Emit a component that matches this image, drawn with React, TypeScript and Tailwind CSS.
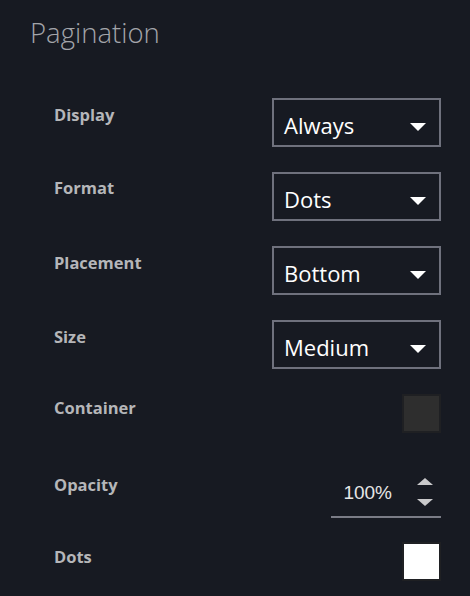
import React from "react";

function Caret() {
  return (
    <svg width="16" height="8" viewBox="0 0 16 8" className="mt-[9px] shrink-0">
      <path d="M0 0H16L8 8Z" fill="#ffffff" />
    </svg>
  );
}

function Select({ value }: { value: string }) {
  return (
    <div className="flex h-[49px] w-[169px] items-center justify-between border-2 border-[#6f717d] pl-[10px] pr-[13px]">
      <span className="mt-[4px] text-[22px] leading-none text-white">{value}</span>
      <Caret />
    </div>
  );
}

function Label({ children, offset }: { children: React.ReactNode; offset: string }) {
  return (
    <span className={`${offset} text-[16.5px] font-bold leading-[22px] text-[#b5b6b9]`}>{children}</span>
  );
}

export default function App() {
  return (
    <main
      className="min-h-screen w-full bg-[#171a22] pr-[29px] pt-[16px] pl-[30px]"
      style={{ fontFamily: '"Open Sans", sans-serif' }}
    >
      <h1 className="text-[27.5px] font-light leading-[34px] text-[#a3a5aa]">Pagination</h1>

      <div className="mt-[48px] flex flex-col pl-[24px]">
        <div className="flex items-start justify-between">
          <Label offset="mt-[6px]">Display</Label>
          <Select value="Always" />
        </div>
        <div className="mt-[25px] flex items-start justify-between">
          <Label offset="mt-[5px]">Format</Label>
          <Select value="Dots" />
        </div>
        <div className="mt-[25px] flex items-start justify-between">
          <Label offset="mt-[6px]">Placement</Label>
          <Select value="Bottom" />
        </div>
        <div className="mt-[25px] flex items-start justify-between">
          <Label offset="mt-[6px]">Size</Label>
          <Select value="Medium" />
        </div>

        <div className="mt-[25px] flex items-start justify-between">
          <Label offset="mt-[3px]">Container</Label>
          <div className="h-[39px] w-[39px] border-2 border-[#1f2023] bg-[#2e2e2e]" />
        </div>

        <div className="mt-[37px] flex items-start justify-between">
          <Label offset="mt-[4px]">Opacity</Label>
          <div className="flex h-[48px] w-[110px] items-center justify-end border-b-2 border-[#7a7c86] pb-[2px]">
            <span
              className="mr-[25px] text-[19px] leading-none text-[#e6e6e6]"
              style={{ fontFamily: '"Liberation Sans", Arial, sans-serif' }}
            >
              100%
            </span>
            <div className="mr-[8px] flex flex-col items-center gap-[14px]">
              <svg width="16" height="7" viewBox="0 0 16 7">
                <path d="M8 0L16 7H0Z" fill="#c9c9cb" />
              </svg>
              <svg width="16" height="7" viewBox="0 0 16 7">
                <path d="M0 0H16L8 7Z" fill="#c9c9cb" />
              </svg>
            </div>
          </div>
        </div>

        <div className="mt-[24px] flex items-start justify-between">
          <Label offset="mt-[4px]">Dots</Label>
          <div className="h-[39px] w-[39px] border-2 border-[#1f2023] bg-white" />
        </div>
      </div>
    </main>
  );
}
